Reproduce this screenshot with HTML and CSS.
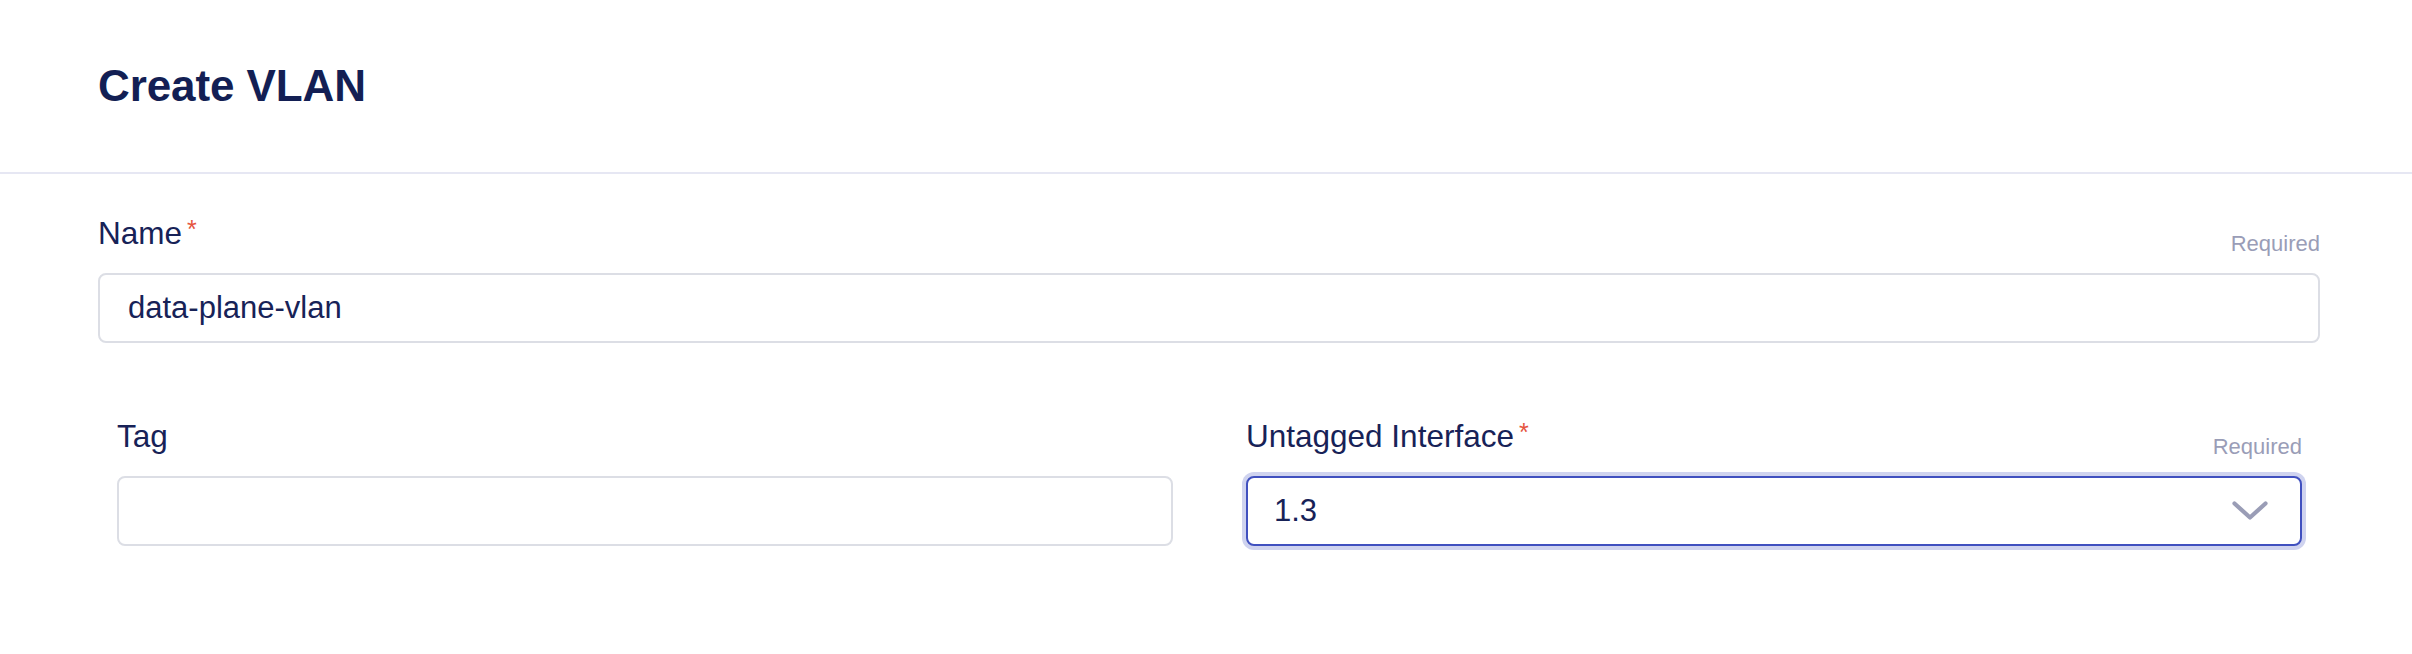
FILE: index.html
```html
<!DOCTYPE html>
<html lang="en">
<head>
<meta charset="utf-8">
<title>Create VLAN</title>
<link rel="stylesheet" href="styles.css">
</head>
<body>
<div class="page">
  <header class="header">
    <h1 class="title">Create VLAN</h1>
  </header>
  <form class="form">
    <div class="field">
      <div class="label-row">
        <label class="label" for="name">Name<span class="star">*</span></label>
        <span class="hint">Required</span>
      </div>
      <input class="input" id="name" type="text" value="data-plane-vlan">
    </div>
    <div class="row">
      <div class="field">
        <div class="label-row">
          <label class="label" for="tag">Tag</label>
        </div>
        <input class="input" id="tag" type="text" value="">
      </div>
      <div class="field">
        <div class="label-row">
          <label class="label">Untagged Interface<span class="star">*</span></label>
          <span class="hint">Required</span>
        </div>
        <div class="select focused">
          <span class="select-value">1.3</span>
          <svg class="chevron" width="36" height="20" viewBox="0 0 36 20" aria-hidden="true">
            <path d="M2.5 2.5 L18 16.5 L33.5 2.5" fill="none" stroke="#9a9db6" stroke-width="4.2" stroke-linecap="round" stroke-linejoin="round"/>
          </svg>
        </div>
      </div>
    </div>
  </form>
</div>
</body>
</html>
```
FILE: styles.css
```css
html, body {
  margin: 0;
  padding: 0;
  background: #ffffff;
}

body {
  font-family: "Liberation Sans", Arial, Helvetica, sans-serif;
  color: #172257;
}

.page {
  width: 2412px;
  min-height: 654px;
}

.header {
  padding: 60px 98px 60px 98px;
  border-bottom: 2px solid #e6e7f3;
}

.title {
  margin: 0;
  font-size: 44px;
  line-height: 52px;
  font-weight: 700;
  color: #131f54;
  letter-spacing: -0.1px;
}

.form {
  padding: 36px 92px 0 98px;
  display: flex;
  flex-direction: column;
  gap: 70px;
}

.field {
  display: flex;
  flex-direction: column;
}

.label-row {
  display: flex;
  justify-content: space-between;
  align-items: flex-end;
  height: 46px;
  margin-bottom: 17px;
}

.label {
  font-size: 31.5px;
  line-height: 46px;
  color: #172257;
}

.star {
  color: #e5553f;
  font-size: 25px;
  line-height: 0;
  vertical-align: 6px;
  margin-left: 5px;
}

.hint {
  font-size: 22px;
  line-height: 25px;
  color: #9a9db7;
}

.input {
  box-sizing: border-box;
  height: 70px;
  width: 100%;
  border: 2px solid #dcdee5;
  border-radius: 8px;
  padding: 0 28px;
  font-family: "Liberation Sans", Arial, Helvetica, sans-serif;
  font-size: 31px;
  color: #172257;
  background: #ffffff;
  outline: none;
}

.row {
  display: grid;
  grid-template-columns: 1fr 1fr;
  column-gap: 73px;
  padding: 0 18px 0 19px;
}

.select {
  box-sizing: border-box;
  height: 70px;
  border: 2px solid #4050bf;
  border-radius: 8px;
  box-shadow: 0 0 0 4px #cfd3ef;
  padding: 0 32px 0 26px;
  display: flex;
  align-items: center;
  justify-content: space-between;
  font-size: 31px;
  color: #172257;
  background: #ffffff;
}

.chevron {
  display: block;
}
```
